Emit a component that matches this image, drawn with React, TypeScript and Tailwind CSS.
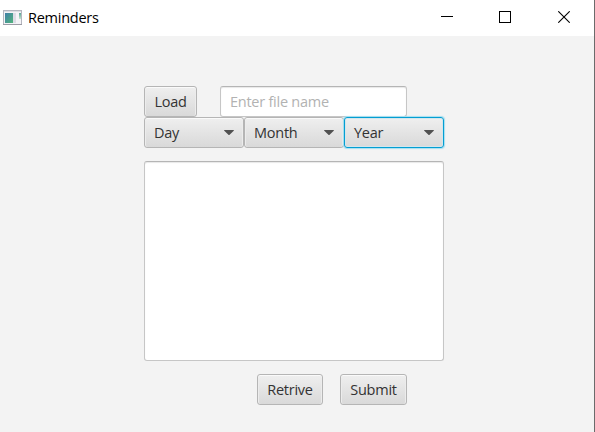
import type { ReactNode } from "react";

function AppIcon() {
  return (
    <svg width="20" height="17" viewBox="0 0 20 17" shapeRendering="crispEdges">
      <defs>
        <linearGradient id="pane" x1="0" y1="0" x2="1" y2="1">
          <stop offset="0" stopColor="#3f7fa8" />
          <stop offset="1" stopColor="#52b47c" />
        </linearGradient>
        <linearGradient id="strip" x1="0" y1="0" x2="0" y2="1">
          <stop offset="0" stopColor="#5aa596" />
          <stop offset="1" stopColor="#c5e6cf" />
        </linearGradient>
      </defs>
      <rect x="0" y="1" width="19" height="15" fill="#b4b6bf" />
      <rect x="1" y="2" width="17" height="1" fill="#dcdde3" />
      <rect x="1" y="3" width="17" height="12" fill="#f4f3f7" />
      <rect x="2" y="4" width="8" height="10" fill="url(#pane)" />
      <rect x="10" y="4" width="3" height="10" fill="#dddce6" />
      <rect x="16" y="4" width="2" height="6" fill="url(#strip)" />
      <rect x="0" y="15" width="19" height="1" fill="#9b9ca5" />
    </svg>
  );
}

const shell =
  "box-border flex h-[31px] shrink-0 items-center rounded-[3px] border text-[#333333]";
const idle =
  "border-[#b5b5b5] bg-linear-to-b from-[#efefef] to-[#d9d9d9] shadow-[inset_0_1px_0_#fafafa,inset_1px_0_0_#ececec,inset_-1px_0_0_#ececec]";
const active =
  "relative border-[#039ed3] bg-linear-to-b from-[#efefef] to-[#d9d9d9] shadow-[0_0_1px_1px_#a5dff0,inset_0_0_0_1px_#d3e6ec]";

function Button({ className, children }: { className: string; children: ReactNode }) {
  return <button className={`${shell} ${idle} justify-center ${className}`}>{children}</button>;
}

function Combo({ label, focused }: { label: string; focused?: boolean }) {
  return (
    <button className={`${shell} ${focused ? active : idle} w-[100px] justify-between pr-[9px] pl-[9px]`}>
      <span>{label}</span>
      <svg width="10" height="5" viewBox="0 0 10 5">
        <path d="M0 .6Q0 0 .6 0h8.8q.6 0 .6.6L5.6 4.8Q5 5.2 4.4 4.8Z" fill="#515151" />
      </svg>
    </button>
  );
}

export default function App() {
  return (
    <div className="flex h-[432px] w-[595px] flex-col overflow-hidden border-r border-[#6b6b6b] bg-[#f3f3f3] font-['Open_Sans','Noto_Sans',sans-serif] text-[14.5px] leading-[20px] tracking-[-0.25px]">
      <header className="flex h-[36px] shrink-0 items-center bg-white pr-[24px] pb-[2px] pl-[3px] text-black">
        <AppIcon />
        <span className="mt-[2px] ml-[5px]">Reminders</span>
        <div className="ml-auto flex items-center">
          <svg className="mr-[46px]" width="12" height="12" shapeRendering="crispEdges">
            <path d="M0 5.5h12" stroke="#000" />
          </svg>
          <svg className="mr-[47px]" width="12" height="12" shapeRendering="crispEdges">
            <path d="M.5.5h11v11H.5z" fill="none" stroke="#000" />
          </svg>
          <svg width="12" height="12">
            <path d="M.3.3l11.4 11.4M11.7.3L.3 11.7" stroke="#000" strokeWidth="1.1" />
          </svg>
        </div>
      </header>
      <main className="ml-[144px] flex w-[300px] flex-col pt-[50px]">
        <div className="flex gap-[23px]">
          <Button className="w-[53px]">Load</Button>
          <input
            placeholder="Enter file name"
            className="box-border h-[31px] w-[187px] rounded-[3px] border border-[#c6c6c6] border-t-[#b5b5b5] bg-white px-[9px] shadow-[inset_0_1px_1px_#e8e8e8] outline-none placeholder:text-[#b2b2b2]"
          />
        </div>
        <div className="flex">
          <Combo label="Day" />
          <Combo label="Month" />
          <Combo label="Year" focused />
        </div>
        <textarea className="mt-[13px] box-border block h-[200px] w-[300px] resize-none rounded-[3px] border border-[#c6c6c6] border-t-[#b5b5b5] bg-white shadow-[inset_0_1px_1px_#e8e8e8] outline-none" />
        <div className="mt-[13px] ml-[113px] flex gap-[17px]">
          <Button className="w-[66px]">Retrive</Button>
          <Button className="w-[67px]">Submit</Button>
        </div>
      </main>
    </div>
  );
}
